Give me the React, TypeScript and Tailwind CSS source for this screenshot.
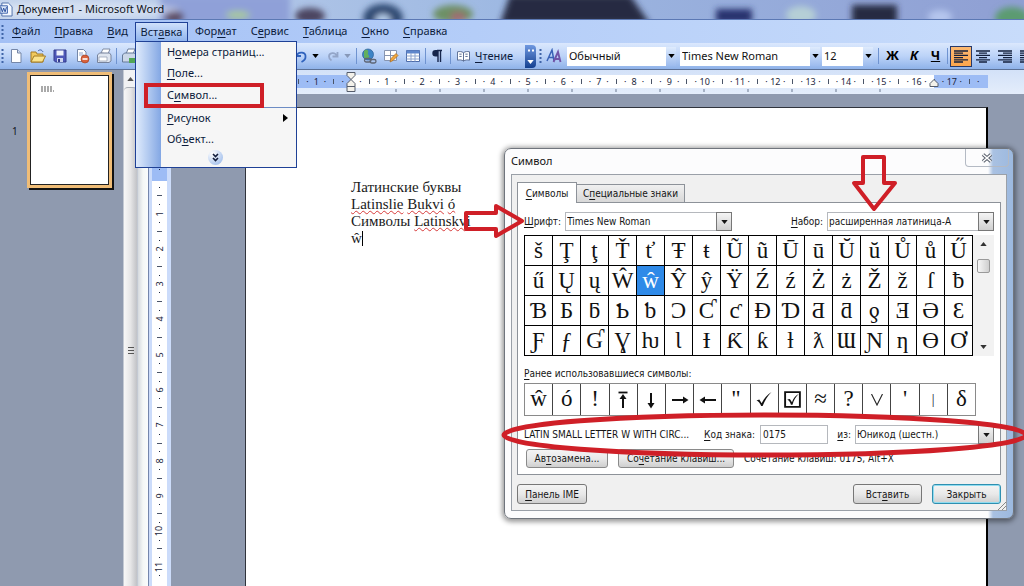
import type { ReactNode } from "react";

const GLYPHS = [
  "šŢţŤťŦŧŨũŪūŬŭŮůŰ",
  "űŲųŴŵŶŷŸŹźŻżŽžſƀ",
  "ƁƂƃƄƅƆƇƈƉƊƋƌƍƎƏƐ",
  "ƑƒƓƔƕƖƗƘƙƚƛƜƝƞƟƠ",
].map((row) => Array.from(row));

const RECENT = ["ŵ", "ó", "!", "⤒", "↓", "→", "←", '"', "✓", "☑", "≈", "?", "∨", "'", "|", "δ"];

/** Renders a caption whose accelerator letter follows an ampersand. */
function Accel({ text }: { text: string }) {
  const at = text.indexOf("&");
  if (at < 0) return <>{text}</>;
  return (
    <>
      {text.slice(0, at)}
      <span className="underline decoration-1 underline-offset-2">{text[at + 1]}</span>
      {text.slice(at + 2)}
    </>
  );
}

function Down({ className = "" }: { className?: string }) {
  return (
    <svg viewBox="0 0 8 5" className={`h-[4px] w-[7px] ${className}`}>
      <path d="M0 0h8L4 5z" fill="currentColor" />
    </svg>
  );
}

function TitleBar() {
  return (
    <header className="relative flex h-[19px] shrink-0 items-center overflow-hidden bg-gradient-to-r from-[#c3d3ec] via-[#9db8e2] to-[#8f9fd3]">
      <svg className="absolute inset-0 h-full w-full" viewBox="0 0 1024 19" preserveAspectRatio="none">
        <defs>
          <filter id="soft" x="-30%" y="-60%" width="160%" height="220%">
            <feGaussianBlur stdDeviation="3" />
          </filter>
        </defs>
        <g filter="url(#soft)">
          <rect x="160" y="-5" width="130" height="30" fill="#8fa0d8" />
          <ellipse cx="174" cy="17" rx="10" ry="7" fill="#5d4d66" />
          <ellipse cx="238" cy="15" rx="12" ry="4" fill="#a9c99a" />
          <ellipse cx="310" cy="16" rx="15" ry="8" fill="#4b4560" />
          <ellipse cx="383" cy="18" rx="20" ry="14" fill="#2e4a72" />
          <ellipse cx="383" cy="20" rx="8" ry="6" fill="#b6cdea" />
          <ellipse cx="453" cy="14" rx="20" ry="9" fill="#6d9065" />
          <ellipse cx="458" cy="17" rx="8" ry="5" fill="#a06a72" />
          <path d="M500 24 510-5H630l20 29z" fill="#272a42" />
          <rect x="716" y="9" width="36" height="14" fill="#28336e" />
          <ellipse cx="801" cy="15" rx="15" ry="9" fill="#b5cfd6" />
          <rect x="852" y="5" width="45" height="20" fill="#252b42" />
          <ellipse cx="940" cy="17" rx="12" ry="7" fill="#b5c6ee" />
          <ellipse cx="1012" cy="18" rx="17" ry="11" fill="#5c9b71" />
        </g>
        <ellipse cx="85" cy="10" rx="95" ry="9" fill="#fff" opacity=".35" filter="url(#soft)" />
      </svg>
      <svg viewBox="0 0 14 16" className="relative h-[15px] w-[13px] shrink-0">
        <path d="M2 1h7l4 4v10H2z" fill="#f4f8ff" stroke="#4a6ca8" />
        <path d="M0 4h8v8H0z" fill="#dce8fa" stroke="#3a5fa8" />
        <path d="M1 5.500l1.500 5L4 6.500l1.500 4 1.500-5" fill="none" stroke="#254b9a" />
      </svg>
      <h1 className="relative ml-1 text-[11px] text-[#10141c]">Документ1 - Microsoft Word</h1>
    </header>
  );
}

function Grip() {
  return (
    <svg viewBox="0 0 3 16" className="mx-px h-4 w-[3px] shrink-0">
      <path d="M1.500 1v15" stroke="#3f64a8" strokeWidth="2" strokeDasharray="2 2" />
    </svg>
  );
}

function MenuRow({ text, children }: { text: string; children?: ReactNode }) {
  return (
    <li className="relative">
      <button className="flex h-[21px] w-full items-center justify-between pr-2 pl-[31px] text-left">
        <span>
          <Accel text={text} />
        </span>
        {children}
      </button>
    </li>
  );
}

function InsertMenu() {
  return (
    <ul className="absolute top-[19px] -left-px z-30 flex w-[162px] flex-col border border-[#1f4196] bg-[#f6f6f6] bg-[linear-gradient(to_right,#dfebfc,#83a7e4_25px,#f6f6f6_25px)] pb-px">
      <MenuRow text="Н&омера страниц..." />
      <MenuRow text="&Поле..." />
      <li className="relative">
        <button className="flex h-[23px] w-full items-center pl-[31px] text-left">
          <span>
            <Accel text="С&имвол..." />
          </span>
        </button>
        <span className="pointer-events-none absolute -top-px left-2 h-[25px] w-[120px] border-4 border-[#cf1f27]" />
      </li>
      <li className="ml-[29px] h-px bg-[#6d8cc4]" />
      <MenuRow text="&Рисунок">
        <svg viewBox="0 0 5 8" className="h-[8px] w-[5px]">
          <path d="M0 0l5 4-5 4z" fill="#000" />
        </svg>
      </MenuRow>
      <MenuRow text="Об&ъект..." />
      <li className="flex h-4 items-center justify-center">
        <button aria-label="Развернуть" className="flex h-[15px] w-[15px] items-center justify-center rounded-full bg-[radial-gradient(circle_at_30%_25%,#ffffff,#8fb2e8)]">
          <svg viewBox="0 0 7 9" className="h-[9px] w-[7px]" fill="none" stroke="#101c3c" strokeWidth="1.600">
            <path d="M1 1l2.500 2.500L6 1M1 5l2.500 2.500L6 5" />
          </svg>
        </button>
      </li>
    </ul>
  );
}

const MENUS = ["&Файл", "&Правка", "&Вид", "Вст&авка", "Фор&мат", "С&ервис", "&Таблица", "&Окно", "&Справка"];

function MenuBar() {
  return (
    <nav className="flex h-6 shrink-0 items-center border-t border-[#5b78b4] bg-gradient-to-r from-[#a3c0f5] to-[#c8dcfb] text-[11px] text-[#0c1c3c]">
      <Grip />
      <ul className="flex">
        {MENUS.map((m) =>
          m === "Вст&авка" ? (
            <li key={m} className="relative">
              <button className="h-[20px] w-[53px] border border-b-0 border-[#1f4196] bg-gradient-to-b from-[#cfe0fb] to-[#8db2ec]">
                <Accel text={m} />
              </button>
              <div className="absolute top-0 left-px">
                <InsertMenu />
              </div>
            </li>
          ) : (
            <li key={m}>
              <button className="h-[20px] px-[7px]">
                <Accel text={m} />
              </button>
            </li>
          ),
        )}
      </ul>
    </nav>
  );
}

function Tool({ label, children }: { label: string; children: ReactNode }) {
  return (
    <button aria-label={label} className="flex h-[22px] w-[22px] shrink-0 items-center justify-center">
      <svg viewBox="0 0 16 16" className="h-[16px] w-[16px]">
        {children}
      </svg>
    </button>
  );
}

function Sep() {
  return <span className="mx-px h-4 w-px shrink-0 bg-[#6f93d0]" />;
}

function ToolCombo({ label, value, className }: { label: string; value: string; className: string }) {
  return (
    <div className={`relative flex h-[19px] shrink-0 ${className}`}>
      <select aria-label={label} className="w-full appearance-none bg-white pl-[2px] text-[11px] text-[#111]">
        <option>{value}</option>
      </select>
      <span className="pointer-events-none absolute inset-y-0 right-0 flex w-[10px] items-center justify-center bg-gradient-to-b from-[#dfebfd] to-[#9dbcee] text-black">
        <Down />
      </span>
    </div>
  );
}

function Align({ label, d, active = false }: { label: string; d: string; active?: boolean }) {
  return (
    <button
      aria-label={label}
      className={`flex h-[21px] w-[22px] shrink-0 items-center justify-center ${active ? "border border-[#26396b] bg-gradient-to-b from-[#fbb972] to-[#fda64c]" : ""}`}
    >
      <svg viewBox="0 0 14 13" className="h-[13px] w-[14px]">
        <path d={d} stroke="#14203c" strokeWidth="1.300" />
      </svg>
    </button>
  );
}

function Toolbar() {
  return (
    <div role="toolbar" className="flex h-[27px] shrink-0 items-center overflow-hidden border-b border-[#5b7095] bg-gradient-to-b from-[#dbe8fd] via-[#bcd3f8] to-[#8fb2e9] text-[11px]">
      <Grip />
      <Tool label="Создать">
        <path d="M3.500 1.500h6l3.500 3.500v9.500h-9.500z" fill="#fff" stroke="#7587a8" />
        <path d="M9.500 1.500V5H13" fill="#d5e0f2" stroke="#7587a8" />
      </Tool>
      <Tool label="Открыть">
        <path d="M1 14V4h5l1 2h6v8z" fill="#f1c95c" stroke="#a37b23" />
        <path d="M1 14l3-6h11.500l-3 6z" fill="#fbe38c" stroke="#a37b23" />
        <path d="M8 3c2-2 4-1 5 1" fill="none" stroke="#3c5ea8" />
      </Tool>
      <Tool label="Сохранить">
        <path d="M2 2h12v12H3.500L2 12.500z" fill="#4e58b8" stroke="#343d8c" />
        <path d="M4.500 2.500h7v5h-7z" fill="#eef2fb" />
        <path d="M5 10h6v4H5z" fill="#cdd5ef" />
        <path d="M6 11h2v3H6z" fill="#343d8c" />
      </Tool>
      <Tool label="Разрешение">
        <path d="M3.500 1.500h6l2.500 2.500v9.500h-8.500z" fill="#fff" stroke="#7587a8" />
        <path d="M5 5h4M5 7h5" stroke="#8fa4c8" />
        <circle cx="11" cy="11" r="4" fill="#d9623c" stroke="#9c3b1c" strokeWidth=".6" />
        <path d="M8.500 11h5" stroke="#fff" strokeWidth="1.600" />
      </Tool>
      <Tool label="Сообщение">
        <path d="M5 5l2-4h7l-2 5z" fill="#fff" stroke="#7f8ba3" />
        <path d="M1.500 7l2-2h10l1.500 2v6l-2 1.500H1.500z" fill="#dfe5ef" stroke="#77839d" />
        <path d="M3 9h8v4H3z" fill="#fff" stroke="#8c98b0" strokeWidth=".7" />
      </Tool>
      <Sep />
      <Tool label="Печать">
        <path d="M5 6l2-5h7l-2 5z" fill="#fff" stroke="#6d7f9d" />
        <path d="M1.500 7l2-2h10l1.500 2v5l-2 2H1.500z" fill="#cbd7e8" stroke="#657998" />
        <path d="M8 10h7v5H8z" fill="#53a657" />
      </Tool>
      <div className="w-[150px] shrink-0" />
      <Tool label="Отменить">
        <path d="M3 3v5h5M3.500 7.500C6 3 13 4 12.500 9c0 2-2 4-4 5" fill="none" stroke="#2f62bd" strokeWidth="1.800" />
      </Tool>
      <Down className="mr-[3px] shrink-0" />
      <Tool label="Вернуть">
        <path d="M12.500 4v4.500h-5M12 8C10 3.500 4 4.500 4 8.500c0 2 1 3 2.500 4" fill="none" stroke="#93a5c8" strokeWidth="1.800" />
      </Tool>
      <Down className="mr-1 shrink-0 text-[#8798b8]" />
      <Sep />
      <Tool label="Гиперссылка">
        <circle cx="7" cy="6.500" r="5.500" fill="#3d84c6" stroke="#2b5f95" strokeWidth=".7" />
        <path d="M3 3c3-3 5 0 4 2s2 2 1 4-4 2-5 0z" fill="#63b05e" />
        <rect x="3.500" y="10.500" width="6.500" height="3.500" rx="1.700" fill="none" stroke="#5e6675" strokeWidth="1.300" />
        <rect x="9" y="11.500" width="6" height="3.500" rx="1.700" fill="none" stroke="#5e6675" strokeWidth="1.300" />
      </Tool>
      <Tool label="Таблицы и границы">
        <path d="M1.500 2.500h12v10h-12z" fill="#fff" stroke="#8795b0" />
        <path d="M1.500 7.500h12M7.500 2.500v10" stroke="#8795b0" />
        <path d="M7 14l1-3.500 5-5 2 2-5 5z" fill="#f2a73d" stroke="#a86a1e" strokeWidth=".7" />
      </Tool>
      <Tool label="Добавить таблицу">
        <path d="M1.500 2.500h13v11h-13z" fill="#fff" stroke="#4c6ba9" />
        <path d="M1.500 2.500h13v3h-13z" fill="#5e86cc" />
        <path d="M1.500 8h13M1.500 11h13M6 5v8.500M10 5v8.500" stroke="#8ba3cf" />
      </Tool>
      <Sep />
      <Tool label="Непечатаемые знаки">
        <path d="M7 2.500h5M8 2v12M10.500 2v12" stroke="#16264c" strokeWidth="1.400" />
        <path d="M8 2H5.500a3.200 3.200 0 000 6.400H8z" fill="#16264c" />
      </Tool>
      <Sep />
      <button className="ml-[5px] flex shrink-0 items-center gap-[5px] text-[#0c1c3c]">
        <svg viewBox="0 0 14 12" className="h-[12px] w-[13px]" fill="#fff" stroke="#51658d">
          <path d="M7 2.500C5 1 3 1 .5 1.500v9C3 10 5 10 7 11.500c2-1.500 4-1.500 6.500-1v-9C11 1 9 1 7 2.500z" />
          <path d="M7 2.500v9M2.500 4h2.500M2.500 6.500h2.500M9 4h2.500M9 6.500h2.500" />
        </svg>
        <span>
          <Accel text="&Чтение" />
        </span>
      </button>
      <button aria-label="Параметры панели" className="ml-auto flex h-[23px] w-[11px] shrink-0 flex-col items-center justify-between rounded-r bg-gradient-to-b from-[#6f98e0] to-[#14408f] py-1 text-white">
        <svg viewBox="0 0 6 3" className="h-[3px] w-[6px]">
          <path d="M0 1.500h2M4 1.500h2" stroke="#fff" strokeWidth="2" />
        </svg>
        <Down />
      </button>
      <div className="flex h-full w-[488px] shrink-0 items-center overflow-hidden pl-[2px]">
        <Grip />
        <Tool label="Стили и форматирование">
          <path d="M1 13L6 2l2 11M3 9.500h4.500" fill="none" stroke="#3a62b6" strokeWidth="1.500" />
          <path d="M7.500 14L12 4l2.500 10M9 11h5" fill="none" stroke="#7155a8" strokeWidth="1.900" />
        </Tool>
        <ToolCombo label="Стиль" value="Обычный" className="ml-[2px] w-[109px]" />
        <ToolCombo label="Шрифт" value="Times New Roman" className="ml-1 w-[140px]" />
        <ToolCombo label="Размер" value="12" className="mr-1 ml-[2px] w-[51px]" />
        <Sep />
        <button className="ml-[2px] w-[21px] shrink-0 text-center text-[13px] font-bold">Ж</button>
        <button className="w-[22px] shrink-0 text-center text-[13px] font-bold italic">К</button>
        <button className="w-[21px] shrink-0 text-center text-[13px] font-bold underline">Ч</button>
        <Sep />
        <div className="ml-px flex shrink-0">
          <Align label="По левому краю" active d="M0 1h14M0 3.200h9M0 5.400h14M0 7.600h9M0 9.800h14M0 12h9" />
          <Align label="По центру" d="M0 1h14M3 3.200h8M0 5.400h14M3 7.600h8M0 9.800h14M3 12h8" />
          <Align label="По правому краю" d="M0 1h14M5 3.200h9M0 5.400h14M5 7.600h9M0 9.800h14M5 12h9" />
          <Align label="По ширине" d="M0 1h14M0 3.200h14M0 5.400h14M0 7.600h14M0 9.800h14M0 12h14" />
        </div>
      </div>
    </div>
  );
}

/** One quarter-centimetre mark: a number, a half-way bar or a dot. */
function mark(k: number) {
  if (k === 0) return "";
  if (k % 4 === 0) return String(Math.abs(k / 4));
  return k % 2 === 0 ? "|" : "·";
}

function HorizontalRuler() {
  return (
    <div className="relative flex h-[24px] shrink-0 items-start bg-gradient-to-b from-[#d3e1f8] to-[#e4edfb] pt-[5px] pl-[98px]">
      <div className="relative flex h-[13px] w-[742px] shrink-0 items-center bg-[linear-gradient(to_right,#9dbcf5_105px,#ffffff_105px,#ffffff_688px,#9dbcf5_688px)] pr-[5px] pl-1 text-[9px] text-[#1c2740]">
        {Array.from({ length: 83 }, (_, i) => (
          <span key={i} className="flex w-0 flex-1 justify-center leading-[12px] whitespace-nowrap">
            {mark(i - 11) === "|" ? <i className="h-[5px] w-px bg-[#4b5568]" /> : mark(i - 11)}
          </span>
        ))}
        <svg viewBox="0 0 742 3" className="absolute top-[14px] left-0 h-[3px] w-[742px]" stroke="#6b7890">
          <path d="M149.500 1.500H660" strokeWidth="3" strokeDasharray="1 43" />
        </svg>
        <svg viewBox="0 0 10 20" className="absolute -top-[3px] left-[100px] h-[20px] w-[10px]" fill="#f3f1ea" stroke="#555c6b">
          <path d="M1 .5h8v3L5 7.500 1 3.500zM5 7.500l4 4v3H1v-3zM1 14.500h8v5H1z" />
        </svg>
        <svg viewBox="0 0 10 8" className="absolute top-[4px] left-[683px] h-[8px] w-[10px]" fill="#f3f1ea" stroke="#555c6b">
          <path d="M5 .5l4 4v3H1v-3z" />
        </svg>
      </div>
    </div>
  );
}

function VerticalRuler() {
  return (
    <div className="flex w-[23px] shrink-0 flex-col overflow-hidden border-l border-[#7486ab] bg-[#ccdcfa] pt-[13px] pr-[4px] pl-[3px]">
      <div className="min-h-0 flex-1 bg-[linear-gradient(to_bottom,#9dbcf5_74px,#ffffff_74px)] pt-[5px] text-[9px] text-[#1c2740]">
        <div className="flex h-[468px] flex-col">
          {Array.from({ length: 53 }, (_, i) => (
            <span key={i} className="flex h-0 flex-1 items-center justify-center">
              {mark(i - 7) === "|" ? (
                <i className="h-px w-[5px] bg-[#4b5568]" />
              ) : mark(i - 7) === "·" ? (
                <i className="h-px w-px bg-[#1c2740]" />
              ) : (
                <span className="-rotate-90 leading-[12px]">{mark(i - 7)}</span>
              )}
            </span>
          ))}
        </div>
      </div>
    </div>
  );
}

function Thumbnails() {
  return (
    <aside className="flex w-[123px] shrink-0 items-start bg-[#8f9aaf] pt-[2px] text-[10px] text-[#10141c]">
      <span className="mt-[52px] w-[27px] pl-[12px]">1</span>
      <button aria-label="Страница 1" className="h-[116px] w-[85px] border-3 border-[#f0bd77] bg-[#f0bd77] shadow-[2px_2px_0_#111]">
        <span className="flex h-full w-full items-start border border-[#222] bg-white p-[10px]">
          <svg viewBox="0 0 13 6" className="h-[6px] w-[13px]" stroke="#555" strokeDasharray="2 1">
            <path d="M0 1h12M0 3h12M0 5h13" />
          </svg>
        </span>
      </button>
    </aside>
  );
}

function SideScroll() {
  return (
    <div className="flex w-[25px] shrink-0">
      <div className="flex w-[15px] flex-col border-x border-[#c3c9d3] bg-[#f3f4f5]">
        <button aria-label="Вверх" className="flex h-[17px] items-center justify-center bg-[#f1f2f4] text-[#555]">
          <Down className="rotate-180" />
        </button>
        <div className="flex h-0 flex-1 flex-col items-center overflow-hidden rounded-t border-t border-[#a8adb5] bg-gradient-to-r from-[#f7f7f7] via-[#e6e6e7] to-[#c1c2c6]">
          <svg viewBox="0 0 6 8" className="mt-[258px] h-[8px] w-[6px] shrink-0" stroke="#555">
            <path d="M0 1.500h6M0 4.500h6M0 7.500h6" />
          </svg>
        </div>
      </div>
      <div className="flex-1 bg-gradient-to-r from-[#d5d9de] via-[#f4f7f5] to-[#fafcfc]" />
    </div>
  );
}

const MISSPELT = "underline decoration-[#d63a3a] decoration-wavy decoration-1 underline-offset-[1px]";

function Page() {
  return (
    <article className="min-h-full w-[743px] shrink-0 border-t border-r-2 border-l border-[#30343c] border-r-black bg-white pt-[71px] pl-[105px] font-['Liberation_Serif',serif] text-[15px] leading-[17px] text-[#1a1a1a]">
      <p>Латинские буквы</p>
      <p>
        <span className={MISSPELT}>Latinslie</span> <span className={MISSPELT}>Bukvi</span> <span className={MISSPELT}>ó</span>
      </p>
      <p>
        Символы <span className={MISSPELT}>Latinskvi</span>
      </p>
      <p className="flex items-center">
        ŵ<span className="h-[15px] w-px bg-black" />
      </p>
    </article>
  );
}

function DropArrow() {
  return (
    <span className="pointer-events-none absolute inset-y-0 right-0 flex w-[16px] items-center justify-center border border-[#777] bg-gradient-to-b from-[#f5f5f5] to-[#cfcfcf]">
      <Down />
    </span>
  );
}

function Field({ id, label, value, className }: { id: string; label: string; value: string; className: string }) {
  return (
    <div className="flex items-center gap-1">
      <label htmlFor={id}>
        <Accel text={label} />
      </label>
      <div className={`relative h-[19px] ${className}`}>
        <select id={id} className="h-full w-full appearance-none border border-[#b5b8bd] bg-white pl-px">
          <option>{value}</option>
        </select>
        <DropArrow />
      </div>
    </div>
  );
}

function PushButton({ text, className }: { text: string; className: string }) {
  return (
    <button className={`rounded-[3px] border bg-gradient-to-b from-[#f4f4f4] via-[#e9e9e9] to-[#cfcfcf] ${className}`}>
      <Accel text={text} />
    </button>
  );
}

function RecentGlyph({ ch }: { ch: string }) {
  if (ch === "⤒")
    return (
      <svg viewBox="0 0 12 18" className="h-[18px] w-[12px]" stroke="#111" fill="#111">
        <path d="M1.500 1.500h9" strokeWidth="1.800" />
        <path d="M6 5v12" strokeWidth="2" />
        <path d="M6 3l3.500 5h-7z" stroke="none" />
      </svg>
    );
  if (ch === "↓")
    return (
      <svg viewBox="0 0 12 18" className="h-[18px] w-[12px]" stroke="#111" fill="#111">
        <path d="M6 2v12" strokeWidth="2" />
        <path d="M6 17.500l3.500-5.500h-7z" stroke="none" />
      </svg>
    );
  if (ch === "→" || ch === "←")
    return (
      <svg viewBox="0 0 18 10" className={`h-[10px] w-[18px] ${ch === "←" ? "rotate-180" : ""}`} stroke="#111" fill="#111">
        <path d="M1 5h13" strokeWidth="2" />
        <path d="M17.500 5L12 1.500v7z" stroke="none" />
      </svg>
    );
  if (ch === "✓")
    return (
      <svg viewBox="0 0 16 16" className="h-[15px] w-[16px]">
        <path d="M0 9l3-1 2.500 4C8 7 11 3 16 0c-4 4-7 9-9.500 15H5C4 12 2 9.500 0 9z" fill="#111" />
      </svg>
    );
  if (ch === "☑")
    return (
      <svg viewBox="0 0 18 18" className="h-[19px] w-[19px]">
        <path d="M2 2h14v14H2z" fill="none" stroke="#111" strokeWidth="1.800" />
        <path d="M4 9l2.500-.5L8.500 11.500C10 7.500 12 5 15 3.500c-2.500 2.500-5 6-6 10.500H7.500C7 12 6 10 4 9z" fill="#111" />
      </svg>
    );
  if (ch === "∨")
    return (
      <svg viewBox="0 0 12 12" className="h-[12px] w-[12px] shrink-0">
        <path d="M.5 0L6 11 11.500 0" fill="none" stroke="#222" strokeWidth="1.100" />
      </svg>
    );
  if (ch === "|") return <span className="text-[14px]">|</span>;
  return <>{ch}</>;
}

function SymbolDialog() {
  return (
    <section
      role="dialog"
      aria-label="Символ"
      className="absolute top-[148px] left-[504px] z-20 flex w-[510px] flex-col rounded-[7px] border border-[#70757d] bg-[linear-gradient(to_right,#fcfcfd_483px,#a9c1e2_488px,#9cb9df)] px-[6px] pb-[7px] font-['DejaVu_Sans_Condensed','Noto_Sans',sans-serif] text-[10px] text-[#151515] shadow-[0_1px_5px_2px_rgba(0,0,0,0.4)]"
    >
      <div className="flex h-[25px] items-start justify-between">
        <h2 className="pt-[4px] font-['Noto_Sans',sans-serif] text-[11px]">Символ</h2>
        <button aria-label="Закрыть окно" className="mr-[-2px] flex h-[18px] w-[44px] items-center justify-center rounded-b border border-t-0 border-[#b4bac4]">
          <svg viewBox="0 0 12 10" className="h-[10px] w-[12px]">
            <path d="M2 1.500l8 7M10 1.500l-8 7" stroke="#585f6c" strokeWidth="3.600" />
            <path d="M2 1.500l8 7M10 1.500l-8 7" stroke="#fff" strokeWidth="1.600" />
          </svg>
        </button>
      </div>
      <div className="relative flex flex-col border border-[#9aa0a8] bg-[#f0f0f0] px-[5px] pt-[7px] pb-[6px]">
        <div role="tablist" className="flex items-end">
          <button role="tab" aria-selected="true" className="relative z-10 -mb-px h-[21px] w-[60px] border border-b-0 border-[#8d9299] bg-white">
            <Accel text="&Символы" />
          </button>
          <button role="tab" className="h-[18px] w-[108px] border border-b-0 border-l-0 border-[#8d9299] bg-gradient-to-b from-[#f0f0f0] to-[#d8d8d8]">
            <Accel text="С&пециальные знаки" />
          </button>
        </div>
        <div className="flex flex-col border border-[#8d9299] bg-white pt-[9px] pr-[6px] pb-[6px] pl-[6px]">
          <div className="flex items-center justify-between">
            <Field id="font" label="&Шрифт:" value="Times New Roman" className="w-[167px]" />
            <Field id="subset" label="&Набор:" value="расширенная латиница-A" className="w-[167px]" />
          </div>
          <div className="mt-[4px] flex">
            <table className="table-fixed border-collapse border border-[#777] font-['Liberation_Serif',serif] text-[23px] text-[#111]">
              <tbody>
                {GLYPHS.map((row, r) => (
                  <tr key={r}>
                    {row.map((g) => (
                      <td
                        key={g}
                        className={`h-[30px] w-[28px] border border-black p-0 text-center leading-[26px] ${g === "ŵ" ? "bg-[#2f8ae8] text-white" : ""}`}
                      >
                        {g}
                      </td>
                    ))}
                  </tr>
                ))}
              </tbody>
            </table>
            <div className="flex flex-1 flex-col items-center bg-[#f2f2f2] py-[7px] text-[#333]">
              <Down className="rotate-180" />
              <div className="mt-[13px] h-[14px] w-[13px] rounded-[2px] border border-[#9a9a9a] bg-gradient-to-r from-[#f7f7f7] to-[#cfcfcf]" />
              <Down className="mt-auto" />
            </div>
          </div>
          <p className="mt-[11px] leading-[14px]">
            <Accel text="&Ранее использовавшиеся символы:" />
          </p>
          <div className="mt-[2px] flex h-[33px] w-[452px] border border-[#8a8a8a] font-['Liberation_Serif',serif] text-[23px] text-[#111]">
            {RECENT.map((c) => (
              <span key={c} className="flex flex-1 items-center justify-center border-r border-[#444] last:border-r-0">
                <RecentGlyph ch={c} />
              </span>
            ))}
          </div>
          <div className="mt-[9px] flex items-center">
            <span className="w-[180px] whitespace-nowrap">LATIN SMALL LETTER W WITH CIRC...</span>
            <label htmlFor="code" className="w-[56px] whitespace-nowrap">
              <Accel text="&Код знака:" />
            </label>
            <input id="code" defaultValue="0175" className="h-[19px] w-[68px] border border-[#b5b8bd] bg-white pl-[2px]" />
            <div className="ml-auto">
              <Field id="from" label="&из:" value="Юникод (шестн.)" className="w-[139px]" />
            </div>
          </div>
          <div className="mt-[5px] flex items-center">
            <PushButton text="Ав&тозамена..." className="ml-[2px] h-[19px] w-[82px] border-[#8a8a8a]" />
            <PushButton text="Со&четание клавиш..." className="ml-[10px] h-[19px] w-[116px] border-[#8a8a8a]" />
            <span className="ml-[10px]">Сочетание клавиш: 0175, Alt+X</span>
          </div>
        </div>
        <div className="mt-[9px] flex items-center">
          <PushButton text="&Панель IME" className="h-[20px] w-[70px] border-[#777]" />
          <PushButton text="Вст&авить" className="ml-auto h-[20px] w-[69px] border-[#777]" />
          <PushButton text="Закрыть" className="ml-[10px] h-[20px] w-[69px] border-[#2f8fb0] shadow-[inset_0_0_0_1px_#8fdcf0]" />
        </div>
        <svg viewBox="0 0 8 8" className="absolute right-0 bottom-0 h-[8px] w-[8px]" stroke="#888">
          <path d="M0 8l8-8M4 8l4-4" />
        </svg>
      </div>
      <svg viewBox="0 0 580 380" className="pointer-events-none absolute -top-px -left-[46px] z-30 h-[380px] w-[580px] overflow-visible" fill="none" stroke="#cf1f27">
        <path d="M7 65h30v-7l26 15-26 15v-7H7z" strokeWidth="4" strokeLinejoin="round" />
        <path d="M404 9h21v26h11l-21 26-20-26h9z" strokeWidth="4" strokeLinejoin="round" />
        <ellipse cx="306" cy="287" rx="261" ry="20" strokeWidth="5" />
      </svg>
    </section>
  );
}

export default function App() {
  return (
    <div className="relative flex h-screen flex-col overflow-hidden bg-[#8f9aaf] font-['Noto_Sans',sans-serif]">
      <TitleBar />
      <MenuBar />
      <Toolbar />
      <main className="flex min-h-0 flex-1">
        <Thumbnails />
        <SideScroll />
        <div className="flex min-w-0 flex-1 flex-col">
          <HorizontalRuler />
          <div className="flex min-h-0 flex-1">
            <VerticalRuler />
            <div className="flex min-w-0 flex-1 overflow-hidden pt-[13px] pl-[74px]">
              <Page />
            </div>
          </div>
        </div>
      </main>
      <SymbolDialog />
    </div>
  );
}
